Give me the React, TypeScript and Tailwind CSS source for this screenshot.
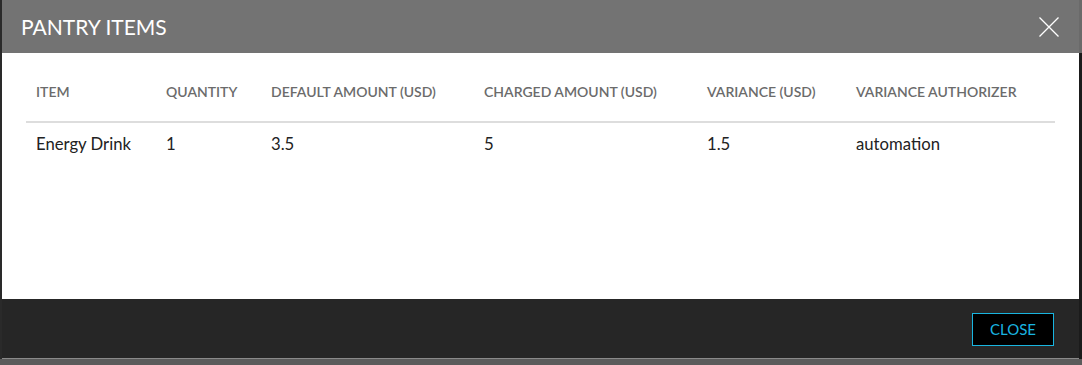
const columns = [
  { key: 'item', label: 'Item', w: 'w-[130px]' },
  { key: 'qty', label: 'Quantity', w: 'w-[105px]' },
  { key: 'def', label: 'Default Amount (USD)', w: 'w-[213px]' },
  { key: 'chg', label: 'Charged Amount (USD)', w: 'w-[223px]' },
  { key: 'var', label: 'Variance (USD)', w: 'w-[149px]' },
  { key: 'auth', label: 'Variance Authorizer', w: '' },
];

const rows = [
  { item: 'Energy Drink', qty: '1', def: '3.5', chg: '5', var: '1.5', auth: 'automation' },
];

const App = () => {
  return (
    <div className="w-[1082px] h-[365px] bg-[#5b5b5b] font-['Lato','Liberation_Sans',sans-serif] overflow-hidden">
      <div className="flex h-[359px]">
        <div className="w-[2px] bg-[#2a2a2a]" />
        <div className="w-[1077px] flex flex-col">
          <div className="h-[53px] bg-[#737373] flex items-center justify-between pl-[19px] pr-[20px]">
            <h2 className="text-[21px] text-white">PANTRY ITEMS</h2>
            <svg width="20" height="20" viewBox="0 0 20 20" className="text-white">
              <path d="M0.5 0.5L19.5 19.5M19.5 0.5L0.5 19.5" stroke="currentColor" strokeWidth="1.3" />
            </svg>
          </div>
          <div className="h-[246px] bg-white px-[24px] pt-[27px]">
            <div className="flex border-b-2 border-[#dddddd] h-[43px] text-[14px] font-semibold text-[#6b6b6b] uppercase">
              {columns.map((c) => (
                <div key={c.key} className={`${c.w} pl-[10px] pt-[1px]`}>{c.label}</div>
              ))}
            </div>
            <div className="flex h-[44px] items-center text-[16.7px] text-[#222222]">
              {rows.map((r) =>
                columns.map((c) => (
                  <div key={c.key} className={`${c.w} pl-[10px]`}>{r[c.key as keyof typeof r]}</div>
                ))
              )}
            </div>
          </div>
          <div className="flex-1 bg-[#262626] flex items-center justify-end pr-[25px] border-b border-[#8a8a8a]">
            <button className="w-[82px] h-[33px] bg-black border border-[#19b5e0] text-[#19b5e0] text-[15px] mt-[2px]">
              CLOSE
            </button>
          </div>
        </div>
        <div className="flex-1 bg-[#1b1b1b] flex flex-col">
          <div className="h-[53px] bg-[#6a6a6a]" />
        </div>
      </div>
    </div>
  );
};

export default App;
